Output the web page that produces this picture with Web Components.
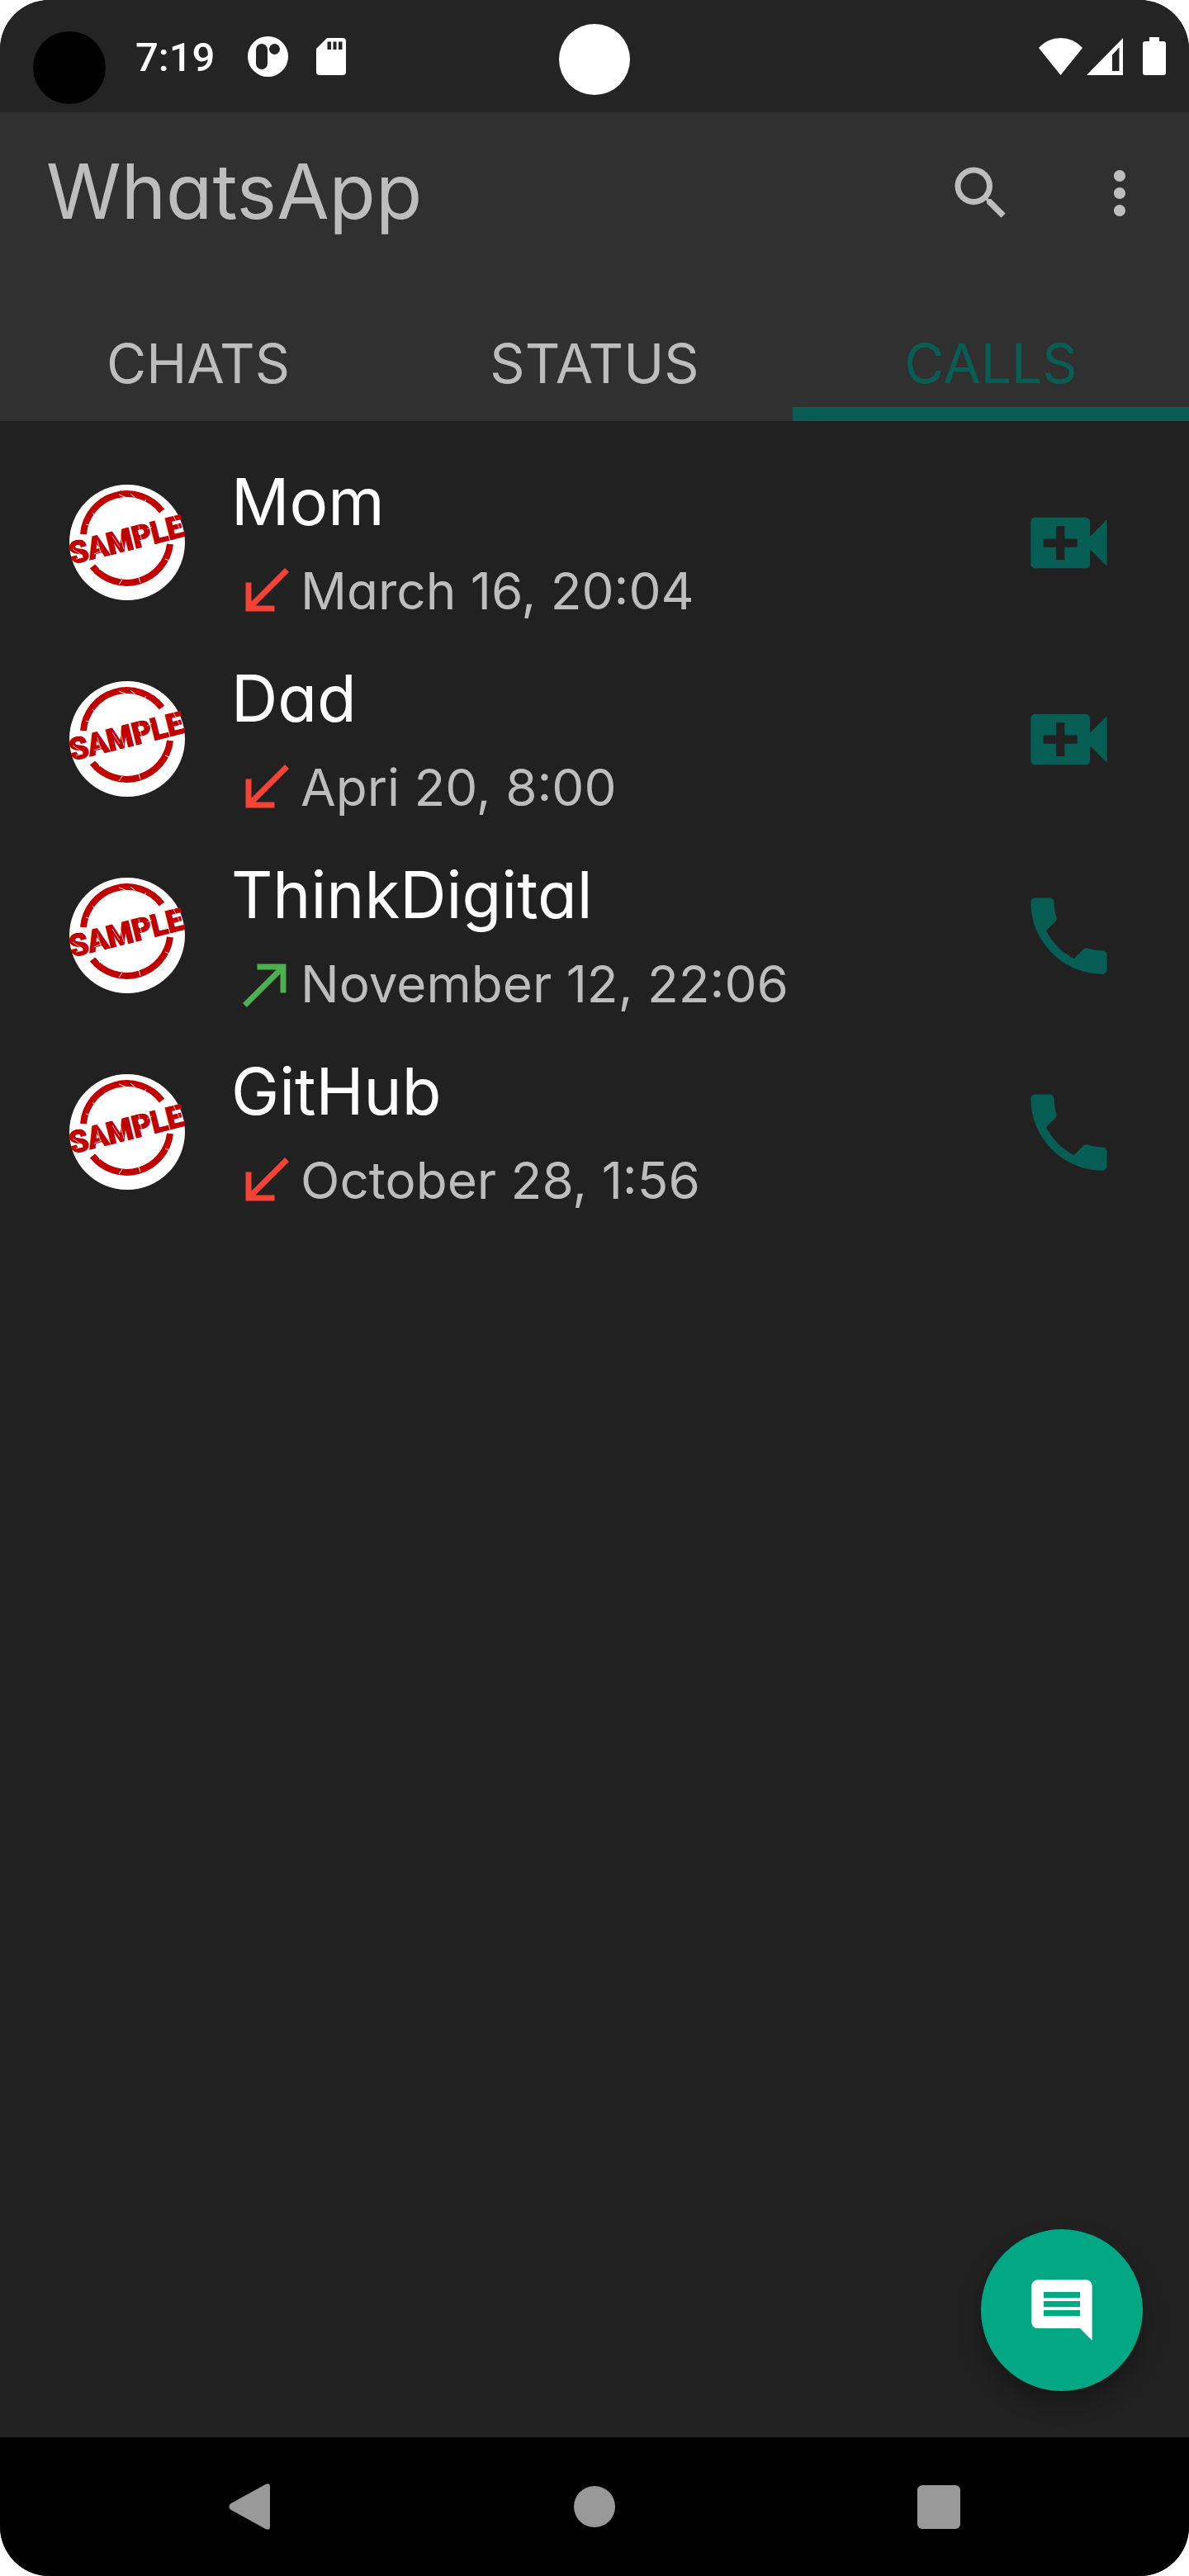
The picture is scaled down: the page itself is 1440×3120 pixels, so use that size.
<!DOCTYPE html>
<html lang="en">
<head>
<meta charset="utf-8">
<meta name="viewport" content="width=device-width, initial-scale=1">
<title>WhatsApp</title>
<style>
  html, body { margin: 0; background: #fff; }
  body { font-family: Inter, "Open Sans", sans-serif; font-feature-settings: "cv11" 1; }
</style>
</head>
<body>
<phone-screen>
  <status-bar slot="status" time="7:19"></status-bar>
  <app-header slot="header" heading="WhatsApp">
    <tab-item>CHATS</tab-item>
    <tab-item>STATUS</tab-item>
    <tab-item selected>CALLS</tab-item>
  </app-header>
  <call-row name="Mom" direction="in" kind="video">March 16, 20:04</call-row>
  <call-row name="Dad" direction="in" kind="video">Apri 20, 8:00</call-row>
  <call-row name="ThinkDigital" direction="out" kind="phone">November 12, 22:06</call-row>
  <call-row name="GitHub" direction="in" kind="phone">October 28, 1:56</call-row>
  <chat-fab slot="fab"></chat-fab>
  <nav-bar slot="nav"></nav-bar>
</phone-screen>

<script>
const ICONS = {
  search: 'M15.5 14h-.79l-.28-.27A6.471 6.471 0 0 0 16 9.5 6.5 6.5 0 1 0 9.5 16c1.61 0 3.09-.59 4.23-1.57l.27.28v.79l5 4.99L20.49 19l-4.99-5zm-6 0C7.01 14 5 11.99 5 9.5S7.01 5 9.5 5 14 7.01 14 9.5 11.99 14 9.5 14z',
  more: 'M12 8c1.1 0 2-.9 2-2s-.9-2-2-2-2 .9-2 2 .9 2 2 2zm0 2c-1.1 0-2 .9-2 2s.9 2 2 2 2-.9 2-2-.9-2-2-2zm0 6c-1.1 0-2 .9-2 2s.9 2 2 2 2-.9 2-2-.9-2-2-2z',
  video: 'M17 10.5V7c0-.55-.45-1-1-1H4c-.55 0-1 .45-1 1v10c0 .55.45 1 1 1h12c.55 0 1-.45 1-1v-3.5l4 4v-11l-4 4zM14 13h-3v3H9v-3H6v-2h3V8h2v3h3v2z',
  phone: 'M20 15.5c-1.25 0-2.45-.2-3.57-.57-.35-.11-.74-.03-1.02.24l-2.2 2.2c-2.83-1.44-5.15-3.75-6.59-6.59l2.2-2.21c.28-.26.36-.65.25-1C8.7 6.45 8.5 5.25 8.5 4c0-.55-.45-1-1-1H4c-.55 0-1 .45-1 1 0 9.39 7.61 17 17 17 .55 0 1-.45 1-1v-3.5c0-.55-.45-1-1-1z',
  in: 'M20 5.41L18.59 4 7 15.59V9H5v10h10v-2H8.41z',
  out: 'M9 5v2h6.59L4 18.59 5.41 20 17 8.41V15h2V5z',
  comment: 'M21.99 4c0-1.1-.89-2-1.99-2H4c-1.1 0-2 .9-2 2v12c0 1.1.9 2 2 2h14l4 4-.01-18zM18 14H6v-2h12v2zm0-3H6V9h12v2zm0-3H6V6h12v2z'
};
const icon = (name, size) =>
  `<svg width="${size}" height="${size}" viewBox="0 0 24 24" fill="currentColor" aria-hidden="true"><path d="${ICONS[name]}"/></svg>`;

const BASE = `*{box-sizing:border-box} svg{display:block;flex:none}
  button{font:inherit;font-feature-settings:inherit;color:inherit;background:none;border:0;margin:0;padding:0;cursor:pointer}`;

class Base extends HTMLElement {
  connectedCallback() {
    if (this.shadowRoot) return;
    this.attachShadow({ mode: 'open' }).innerHTML = `<style>${BASE}${this.css()}</style>${this.html()}`;
  }
}

customElements.define('phone-screen', class extends Base {
  css() { return `
    :host{display:flex;flex-direction:column;min-height:100vh;border-radius:60px;overflow:hidden;background:#212121;color:#bdbdbd}
    main{flex:1;position:relative;padding:28px 0}
    .fab{position:absolute;right:56px;bottom:56px}`; }
  html() { return `<slot name="status"></slot><slot name="header"></slot>
    <main><slot></slot><div class="fab"><slot name="fab"></slot></div></main><slot name="nav"></slot>`; }
});

customElements.define('status-bar', class extends Base {
  css() { return `
    :host{display:grid;grid-template-columns:1fr 86px 1fr;align-items:center;height:136px;padding:0 28px;background:#242424;color:#fff}
    .left,.right{display:flex;align-items:center}
    .lens{width:88px;height:88px;border-radius:50%;background:#000;margin:28px 36px 0 12px}
    time{font:500 49px/58px Roboto,sans-serif;padding-top:4px;margin-right:40px}
    .sd{margin-left:34px}
    .cam{width:86px;height:86px;border-radius:50%;background:#fff;margin-top:8px}
    .right{justify-content:flex-end}
    .bat{margin-left:24px}.sig{margin-left:5px}`; }
  html() { return `
    <div class="left"><div class="lens"></div><time>${this.getAttribute('time')}</time>
      <svg width="49" height="49" viewBox="0 0 49 49"><circle cx="24.5" cy="24.5" r="24.5" fill="#fff"/><rect x="10" y="9" width="14" height="31" rx="7" fill="#242424"/><circle cx="32.5" cy="15.5" r="6.5" fill="#242424"/></svg>
      <svg class="sd" width="36" height="45" viewBox="0 0 36 45"><path fill="#fff" fill-rule="evenodd" d="M13 0H32Q36 0 36 4V41Q36 45 32 45H4Q0 45 0 41V13ZM13.5 4.5V14H18V4.5ZM20.5 4.5V14H24.5V4.5ZM27 4.5V14H31.5V4.5Z"/></svg></div>
    <div class="cam"></div>
    <div class="right">
      <svg width="53" height="45" viewBox="0 0 53 45"><path fill="#fff" d="M0 12Q11 0 26.5 0T53 12L26.5 45Z"/></svg>
      <svg class="sig" width="44" height="45" viewBox="0 0 44 45"><path fill="#fff" fill-rule="evenodd" d="M44 0V45H0ZM39.5 11.5L31 20.5V40H39.5Z"/></svg>
      <svg class="bat" width="28" height="46" viewBox="0 0 28 46"><path fill="#fff" d="M8 0H20V5H25Q28 5 28 8V43Q28 46 25 46H3Q0 46 0 43V8Q0 5 3 5H8Z"/></svg></div>`; }
});

customElements.define('app-header', class extends Base {
  css() { return `
    :host{display:block;background:#303030}
    .bar{display:flex;align-items:center;gap:84px;height:196px;padding:0 42px 0 56px}
    h1{flex:1;margin:0;font-size:92px;line-height:112px;font-weight:400;padding-bottom:4px}
    nav{display:grid;grid-template-columns:repeat(3,1fr);height:178px}`; }
  html() { return `<div class="bar"><h1>${this.getAttribute('heading')}</h1>
    <button aria-label="Search">${icon('search', 84)}</button>
    <button aria-label="More options">${icon('more', 84)}</button></div>
    <nav><slot></slot></nav>`; }
});

customElements.define('tab-item', class extends Base {
  css() { return `
    :host{display:grid}
    button{font-size:66px;line-height:84px;padding-top:38px}
    :host([selected]) button{color:#075e54;box-shadow:inset 0 -17px #075e54}`; }
  html() { return `<button><slot></slot></button>`; }
});

customElements.define('sample-avatar', class extends Base {
  css() { return `:host{display:block;width:140px;height:140px;border-radius:50%;background:#fff}
    text{font:700 36px Roboto,sans-serif}`; }
  html() { return `<svg width="140" height="140" viewBox="0 0 140 140">
    <g fill="none" stroke="#c00000" stroke-width="8">
      <path d="M17 60A53 53 0 0 1 112 32"/><path d="M122 72A53 53 0 0 1 28 99"/></g>
    <g fill="none" stroke="#fff" stroke-width="1"><path d="M20 48l9 3M28 34l4 5M60 12l10 4M74 11l6 5M93 18l-4 6M36 103l7-3M60 121l4-6M86 119l-2-7M116 90l5 2"/></g>
    <text x="69" y="79" text-anchor="middle" fill="#c00000" stroke="#c00000" stroke-width="2" transform="rotate(-14 70 66)">SAMPLE</text>
    <g fill="none" stroke="#fff" stroke-width="1" opacity=".7"><path d="M4 78l12 8M8 90l9-2M34 68l5 18M52 62l9 14M60 56l6 22M84 50l4 20M104 44l7 18M126 38l8 16M30 84l9-4M94 54l6-3"/></g></svg>`; }
});

customElements.define('call-row', class extends Base {
  css() { return `
    :host{display:flex;align-items:center;height:238px;padding:0 84px}
    .text{flex:1;margin-left:56px}
    .name{color:#fff;font-size:78px;line-height:104px;margin-bottom:14px}
    .when{display:flex;align-items:center;font-size:62px;line-height:84px}
    .in{color:#f44336}.out{color:#4caf50}
    button{color:#075e54}`; }
  html() {
    const dir = this.getAttribute('direction'), kind = this.getAttribute('kind');
    return `<sample-avatar></sample-avatar>
    <div class="text"><div class="name">${this.getAttribute('name')}</div>
      <div class="when"><span class="${dir}">${icon(dir, 84)}</span><span><slot></slot></span></div></div>
    <button aria-label="${kind} call">${icon(kind, 123)}</button>`; }
});

customElements.define('chat-fab', class extends Base {
  css() { return `:host{display:block}
    button{display:grid;place-items:center;width:196px;height:196px;border-radius:50%;background:#02a884;color:#fff;box-shadow:0 14px 28px rgba(0,0,0,.3)}`; }
  html() { return `<button aria-label="New call">${icon('comment', 88)}</button>`; }
});

customElements.define('nav-bar', class extends Base {
  css() { return `:host{display:flex;align-items:center;justify-content:center;gap:366px;height:168px;background:#000;color:#999}`; }
  html() { return `
    <button aria-label="Back"><svg width="52" height="56" viewBox="0 0 52 56"><path fill="currentColor" d="M2 24.5L45 .8Q50-1 50 4V52Q50 57 45 55.2L2 31.5Q-1 28 2 24.5Z"/></svg></button>
    <button aria-label="Home"><svg width="50" height="50" viewBox="0 0 50 50"><circle cx="25" cy="25" r="25" fill="currentColor"/></svg></button>
    <button aria-label="Recent apps"><svg width="52" height="53" viewBox="0 0 52 53"><rect width="52" height="53" rx="6" fill="currentColor"/></svg></button>`; }
});
</script>
</body>
</html>
